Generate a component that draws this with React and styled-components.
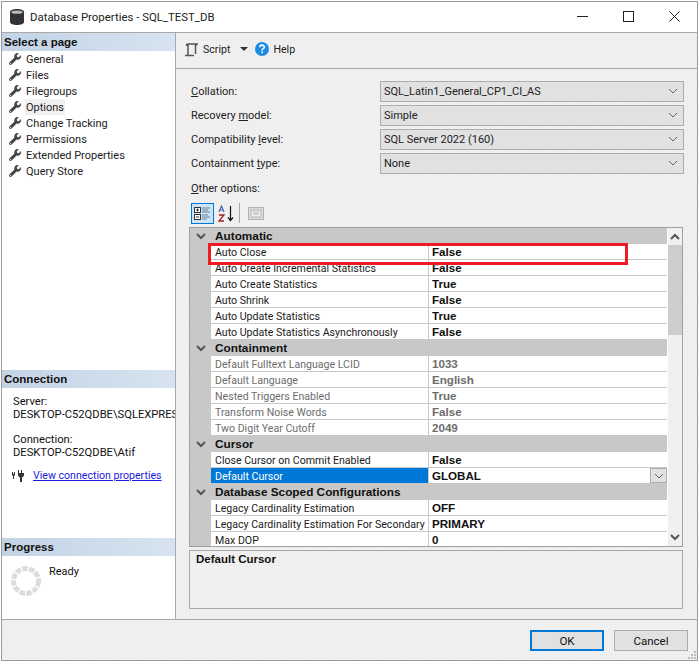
import React from 'react';
import styled, { createGlobalStyle } from 'styled-components';
import { FaWrench } from 'react-icons/fa';

const Global = createGlobalStyle`
  html, body { margin: 0; padding: 0; background: #fff; }
  body { font-family: Roboto, "Liberation Sans", Arial, sans-serif; font-size: 11px; color: #111; }
  #root { width: 700px; height: 662px; overflow: hidden; }
  * { box-sizing: border-box; }
`;

const boldFont = `"Liberation Sans", Arial, sans-serif`;

const dotted = `
  background-color: #f0f0f0;
  background-image: radial-gradient(#e9e9e9 0.6px, transparent 0.8px);
  background-size: 3px 3px;
`;

const Page = styled.div`
  width: 700px;
  height: 662px;
  padding: 1px 2px 1px 1px;
`;
const Win = styled.div`
  width: 697px;
  height: 660px;
  border: 1px solid #9a9a9a;
  display: flex;
  flex-direction: column;
  background: #fff;
`;
const TitleBar = styled.div`
  height: 30px;
  flex: none;
  display: flex;
  align-items: center;
  padding-left: 8px;
  border-bottom: 1px solid #a8a8a8;
  box-sizing: content-box;
`;
const TitleText = styled.span`
  margin-left: 6px;
  padding-bottom: 1px;
  font-size: 11.4px;
  color: #222;
  flex: 1;
`;
const WinButtons = styled.div`
  display: flex;
  align-items: center;
  gap: 35px;
  padding: 0 17px 2px 0;
`;
const Body = styled.div`
  flex: 1;
  display: flex;
  min-height: 0;
`;
const Side = styled.aside`
  width: 174px;
  flex: none;
  border-right: 1px solid #a8a8a8;
  background: #fff;
  display: flex;
  flex-direction: column;
`;
const SideHead = styled.div`
  height: 18px;
  flex: none;
  padding-left: 2px;
  line-height: 18px;
  font-family: ${boldFont};
  font-weight: 700;
  font-size: 11.5px;
  color: #111;
  background: linear-gradient(90deg, #c3d3e5, #d7e3f0);
`;
const NavSec = styled.div`
  height: 337px;
  flex: none;
`;
const NavItem = styled.div`
  height: 16px;
  display: flex;
  align-items: center;
  padding-left: 7px;
  color: #222;
  svg { color: #444; flex: none; }
`;
const NavLabel = styled.span`
  margin-left: 4px;
  padding: 1px 1px 0;
  line-height: 15px;
  background: ${p => (p.$active ? '#f0f0f0' : 'transparent')};
`;
const ConnSec = styled.div`
  height: 168px;
  flex: none;
`;
const ConnInfo = styled.div`
  padding: 7px 0 0 11px;
  line-height: 13px;
  font-size: 11.2px;
  white-space: nowrap;
  overflow: hidden;
  color: #111;
`;
const ConnGroup = styled.div`
  margin-bottom: 12px;
`;
const ConnLink = styled.div`
  display: flex;
  align-items: center;
  margin-top: -2px;
  padding: 0 0 0 10px;
  gap: 8px;
  white-space: nowrap;
`;
const LinkText = styled.a`
  color: #1a1ae0;
  font-size: 10.6px;
  text-decoration: underline;
`;
const ProgSec = styled.div`
  flex: 1;
`;
const ProgRow = styled.div`
  display: flex;
  padding: 9px 0 0 9px;
  gap: 8px;
  svg { margin-top: 1px; }
`;
const Main = styled.main`
  flex: 1;
  min-width: 0;
  ${dotted}
  display: flex;
  flex-direction: column;
`;
const ToolBar = styled.div`
  height: 36px;
  flex: none;
  display: flex;
  align-items: center;
  padding: 0 0 3px 8px;
  border-bottom: 1px solid #a8a8a8;
  color: #222;
`;
const ToolLabel = styled.span`
  margin-left: 4px;
  font-size: 10.6px;
`;
const Caret = styled.span`
  width: 0;
  height: 0;
  margin: 0 7px 0 10px;
  border: 4px solid transparent;
  border-top-color: #333;
  border-bottom: 0;
`;
const Form = styled.div`
  padding: 12px 13px 0 13px;
`;
const FormRow = styled.div`
  display: flex;
  align-items: center;
  height: 20px;
  margin-bottom: 4px;
`;
const FormLabel = styled.label`
  width: 191px;
  padding-left: 2px;
  color: #222;
`;
const Key = styled.span`
  text-decoration: underline;
`;
const Combo = styled.div`
  width: 304px;
  height: 21px;
  background: #e1e1e1;
  border: 1px solid #adadad;
  display: flex;
  align-items: center;
  justify-content: space-between;
  padding: 0 5px 0 3px;
  color: #222;
`;
const OtherLabel = styled.div`
  margin: 8px 0 0 2px;
  height: 16px;
  line-height: 16px;
  color: #222;
`;
const IconBar = styled.div`
  display: flex;
  align-items: center;
  height: 22px;
  margin: 5px 0 0 2px;
`;
const IconToggle = styled.div`
  width: 23px;
  height: 21px;
  border: 1px solid #0078d7;
  background: #cce4f7;
  display: flex;
  align-items: center;
  justify-content: center;
  margin-right: 3px;
`;
const IconPlain = styled.div`
  width: 20px;
  height: 21px;
  display: flex;
  align-items: center;
  justify-content: center;
`;
const IconSep = styled.div`
  width: 1px;
  height: 20px;
  background: #a8a8a8;
  margin: 0 6px 0 2px;
`;
const Grid = styled.div`
  position: relative;
  margin: 3px 0 0 0;
  width: 494px;
  height: 320px;
  border: 1px solid #a0a0a0;
  display: flex;
  overflow: hidden;
  background: #c8c8c8;
`;
const Rows = styled.div`
  width: 477px;
  flex: none;
  overflow: hidden;
`;
const Cat = styled.div`
  height: 16px;
  background: #c8c8c8;
  display: flex;
  align-items: center;
  font-family: ${boldFont};
  font-weight: 700;
  font-size: 11.8px;
  color: #111;
  line-height: 16px;
`;
const CatChevron = styled.div`
  width: 25px;
  flex: none;
  display: flex;
  justify-content: center;
  padding-right: 4px;
`;
const Row = styled.div`
  height: 16px;
  margin-left: 21px;
  display: flex;
  border-bottom: 1px solid #c8c8c8;
  background: #fff;
  line-height: 15px;
`;
const Name = styled.div`
  width: 218px;
  flex: none;
  padding: 2px 0 0 4px;
  line-height: 13px;
  font-size: 10.6px;
  white-space: nowrap;
  overflow: hidden;
  border-right: 1px solid #c8c8c8;
  color: ${p => (p.$sel ? '#fff' : p.$off ? '#6d6d6d' : '#1a1a1a')};
  background: ${p => (p.$sel ? '#0078d7' : 'transparent')};
`;
const Value = styled.div`
  flex: 1;
  padding-left: 3px;
  font-family: ${boldFont};
  font-weight: 700;
  font-size: 11.6px;
  position: relative;
  color: ${p => (p.$off ? '#6d6d6d' : '#111')};
`;
const DropBtn = styled.div`
  position: absolute;
  right: 0;
  top: 0;
  width: 17px;
  height: 15px;
  background: #e1e1e1;
  border: 1px solid #adadad;
  display: flex;
  align-items: center;
  justify-content: center;
`;
const Scroll = styled.div`
  flex: 1;
  background: #f0f0f0;
  display: flex;
  flex-direction: column;
  align-items: center;
  border-left: 1px solid #fff;
`;
const ScrollArrow = styled.div`
  height: 17px;
  display: flex;
  align-items: center;
  justify-content: center;
`;
const Thumb = styled.div`
  width: 100%;
  height: 90px;
  background: #cdcdcd;
`;
const ScrollGap = styled.div`
  flex: 1;
`;
const HighlightBox = styled.div`
  position: absolute;
  left: 18px;
  top: 15px;
  width: 420px;
  height: 22px;
  border: 3px solid #ed1c24;
`;
const Desc = styled.div`
  margin-top: 3px;
  width: 494px;
  height: 59px;
  border: 1px solid #a8a8a8;
  padding: 2px 6px;
  font-family: ${boldFont};
  font-weight: 700;
  font-size: 11.5px;
  color: #111;
`;
const Foot = styled.div`
  height: 40px;
  flex: none;
  ${dotted}
  border-top: 1px solid #a8a8a8;
  box-sizing: content-box;
  display: flex;
  justify-content: flex-end;
  position: relative;
`;
const FootInner = styled.div`
  display: flex;
  gap: 10px;
  padding: 10px 9px 0 0;
`;
const Btn = styled.button`
  width: 74px;
  height: 21px;
  padding: 0;
  font: inherit;
  font-size: 11.5px;
  color: #111;
  background: #e1e1e1;
  border: ${p => (p.$primary ? '2px solid #0078d7' : '1px solid #adadad')};
`;
const Grip = styled.svg`
  position: absolute;
  right: 1px;
  bottom: 1px;
`;

const Wrench = () => <FaWrench size={12} />;
const Chevron = ({ up, color = '#555' }) => (
  <svg width="10" height="7" viewBox="0 0 10 7">
    <path d={up ? 'M1 6l4-4 4 4' : 'M1 1l4 4 4-4'} fill="none" stroke={color} strokeWidth="2" />
  </svg>
);
const ThinChevron = () => (
  <svg width="10" height="6" viewBox="0 0 10 6">
    <path d="M1 1l4 4 4-4" fill="none" stroke="#666" strokeWidth="1" />
  </svg>
);

const DbIcon = () => (
  <svg width="14" height="16" viewBox="0 0 14 16">
    <path d="M0 3c0-4 14-4 14 0v10c0 4-14 4-14 0z" fill="#333" />
    <ellipse cx="7" cy="3.2" rx="5.6" ry="1.6" fill="#bbb" />
  </svg>
);
const ScriptIcon = () => (
  <svg width="15" height="15" viewBox="0 0 15 15">
    <path d="M4 13V2h10M4 2c-1 0-1.500 1-1.500 2M12 2v2M11.500 2.500V12M1 13.500h9" fill="none" stroke="#555" strokeWidth="1.500" />
  </svg>
);
const HelpIcon = () => (
  <svg width="14" height="14" viewBox="0 0 15 15">
    <circle cx="7.500" cy="7.500" r="7.500" fill="#1c8ce0" />
    <path d="M5.200 5.600c0-3 4.800-3 4.800-.2 0 1.800-2.400 1.800-2.400 3.600" fill="none" stroke="#fff" strokeWidth="1.700" />
    <rect x="6.700" y="10.200" width="1.800" height="1.800" fill="#fff" />
  </svg>
);
const PlugIcon = () => (
  <svg width="13" height="13" viewBox="0 0 13 13">
    <path d="M0 3h1v2h1V3h1v3L2 7v3H1V7L0 6zM6 1h1v3h2V1h1v3h2v1.500c0 2-1 2.500-2 3V13H8V8.500c-1-.5-2-1-2-3z" fill="#333" />
  </svg>
);
const Spinner = () => (
  <svg width="30" height="30" viewBox="0 0 30 30">
    <circle cx="15" cy="15" r="12.500" fill="none" stroke="#dcdcdc" strokeWidth="5" strokeDasharray="5.500 1.350" />
  </svg>
);
const CategorizedIcon = () => (
  <svg width="17" height="15" viewBox="0 0 17 15">
    <rect x="0.500" y="1.500" width="6" height="5" fill="#fff" stroke="#333" />
    <path d="M2 4h3M3.500 2.500v3" stroke="#333" />
    <rect x="0.500" y="8.500" width="6" height="5" fill="#fff" stroke="#333" />
    <path d="M2 11h3" stroke="#333" />
    <path d="M8 2h8M8 4h6M8 6h8M8 9h6M8 11h8M8 13h5" stroke="#6d8296" />
  </svg>
);
const SortIcon = () => (
  <svg width="18" height="17" viewBox="0 0 18 17">
    <path d="M1 7l2.500-6L6 7M2 5h3" fill="none" stroke="#3a5fb0" strokeWidth="1.100" />
    <path d="M1 10h5L1 16h5" fill="none" stroke="#a02020" strokeWidth="1.300" />
    <path d="M12.500 1v14M10 12.500l2.500 3 2.500-3" fill="none" stroke="#111" strokeWidth="1.200" />
  </svg>
);
const PageIcon = () => (
  <svg width="16" height="15" viewBox="0 0 16 15">
    <rect x="0.500" y="1.500" width="15" height="12" fill="#dcdcdc" stroke="#b0b0b0" />
    <rect x="3" y="4" width="10" height="7" fill="#eee" stroke="#b8b8b8" />
    <path d="M5 6h6M5 8h6" stroke="#b8b8b8" />
  </svg>
);

const pages = ['General', 'Files', 'Filegroups', 'Options', 'Change Tracking', 'Permissions', 'Extended Properties', 'Query Store'];

const groups = [
  { title: 'Automatic', rows: [
    ['Auto Close', 'False'],
    ['Auto Create Incremental Statistics', 'False'],
    ['Auto Create Statistics', 'True'],
    ['Auto Shrink', 'False'],
    ['Auto Update Statistics', 'True'],
    ['Auto Update Statistics Asynchronously', 'False'],
  ] },
  { title: 'Containment', off: true, rows: [
    ['Default Fulltext Language LCID', '1033'],
    ['Default Language', 'English'],
    ['Nested Triggers Enabled', 'True'],
    ['Transform Noise Words', 'False'],
    ['Two Digit Year Cutoff', '2049'],
  ] },
  { title: 'Cursor', rows: [
    ['Close Cursor on Commit Enabled', 'False'],
    ['Default Cursor', 'GLOBAL', true],
  ] },
  { title: 'Database Scoped Configurations', rows: [
    ['Legacy Cardinality Estimation', 'OFF'],
    ['Legacy Cardinality Estimation For Secondary', 'PRIMARY'],
    ['Max DOP', '0'],
  ] },
];

const combos = [
  [<><Key>C</Key>ollation:</>, 'SQL_Latin1_General_CP1_CI_AS'],
  [<>Recovery <Key>m</Key>odel:</>, 'Simple'],
  [<>Compatibility <Key>l</Key>evel:</>, 'SQL Server 2022 (160)'],
  [<>Containment <Key>t</Key>ype:</>, 'None'],
];

export default function App() {
  return (
    <Page>
      <Global />
      <Win>
        <TitleBar>
          <DbIcon />
          <TitleText>Database Properties - SQL_TEST_DB</TitleText>
          <WinButtons>
            <svg width="11" height="11" viewBox="0 0 11 11"><path d="M0 5.500h11" stroke="#222" /></svg>
            <svg width="11" height="11" viewBox="0 0 11 11"><rect x="0.500" y="0.500" width="10" height="10" fill="none" stroke="#222" /></svg>
            <svg width="11" height="11" viewBox="0 0 11 11"><path d="M0.500 0.500l10 10M10.500 0.500l-10 10" stroke="#222" /></svg>
          </WinButtons>
        </TitleBar>
        <Body>
          <Side>
            <NavSec>
              <SideHead>Select a page</SideHead>
              {pages.map(p => (
                <NavItem key={p}>
                  <Wrench />
                  <NavLabel $active={p === 'Options'}>{p}</NavLabel>
                </NavItem>
              ))}
            </NavSec>
            <ConnSec>
              <SideHead>Connection</SideHead>
              <ConnInfo>
                <ConnGroup>Server:<br />DESKTOP-C52QDBE\SQLEXPRESS</ConnGroup>
                <ConnGroup>Connection:<br />DESKTOP-C52QDBE\Atif</ConnGroup>
              </ConnInfo>
              <ConnLink>
                <PlugIcon />
                <LinkText>View connection properties</LinkText>
              </ConnLink>
            </ConnSec>
            <ProgSec>
              <SideHead>Progress</SideHead>
              <ProgRow>
                <Spinner />
                <span>Ready</span>
              </ProgRow>
            </ProgSec>
          </Side>
          <Main>
            <ToolBar>
              <ScriptIcon />
              <ToolLabel>Script</ToolLabel>
              <Caret />
              <HelpIcon />
              <ToolLabel>Help</ToolLabel>
            </ToolBar>
            <Form>
              {combos.map(([label, value], i) => (
                <FormRow key={i}>
                  <FormLabel>{label}</FormLabel>
                  <Combo>
                    <span>{value}</span>
                    <ThinChevron />
                  </Combo>
                </FormRow>
              ))}
              <OtherLabel><Key>O</Key>ther options:</OtherLabel>
              <IconBar>
                <IconToggle><CategorizedIcon /></IconToggle>
                <IconPlain><SortIcon /></IconPlain>
                <IconSep />
                <IconPlain><PageIcon /></IconPlain>
              </IconBar>
              <Grid>
                <Rows>
                  {groups.map(g => (
                    <React.Fragment key={g.title}>
                      <Cat>
                        <CatChevron><Chevron /></CatChevron>
                        {g.title}
                      </Cat>
                      {g.rows.map(([name, value, sel]) => (
                        <Row key={name}>
                          <Name $off={g.off} $sel={sel}>{name}</Name>
                          <Value $off={g.off}>
                            {value}
                            {sel && <DropBtn><ThinChevron /></DropBtn>}
                          </Value>
                        </Row>
                      ))}
                    </React.Fragment>
                  ))}
                </Rows>
                <Scroll>
                  <ScrollArrow><Chevron up /></ScrollArrow>
                  <Thumb />
                  <ScrollGap />
                  <ScrollArrow><Chevron /></ScrollArrow>
                </Scroll>
                <HighlightBox />
              </Grid>
              <Desc>Default Cursor</Desc>
            </Form>
          </Main>
        </Body>
        <Foot>
          <FootInner>
            <Btn $primary>OK</Btn>
            <Btn>Cancel</Btn>
          </FootInner>
          <Grip width="9" height="9" viewBox="0 0 9 9">
            <path d="M7 1h2v2H7zM4 4h2v2H4zM7 4h2v2H7zM1 7h2v2H1zM4 7h2v2H4zM7 7h2v2H7z" fill="#bdbdbd" />
          </Grip>
        </Foot>
      </Win>
    </Page>
  );
}
